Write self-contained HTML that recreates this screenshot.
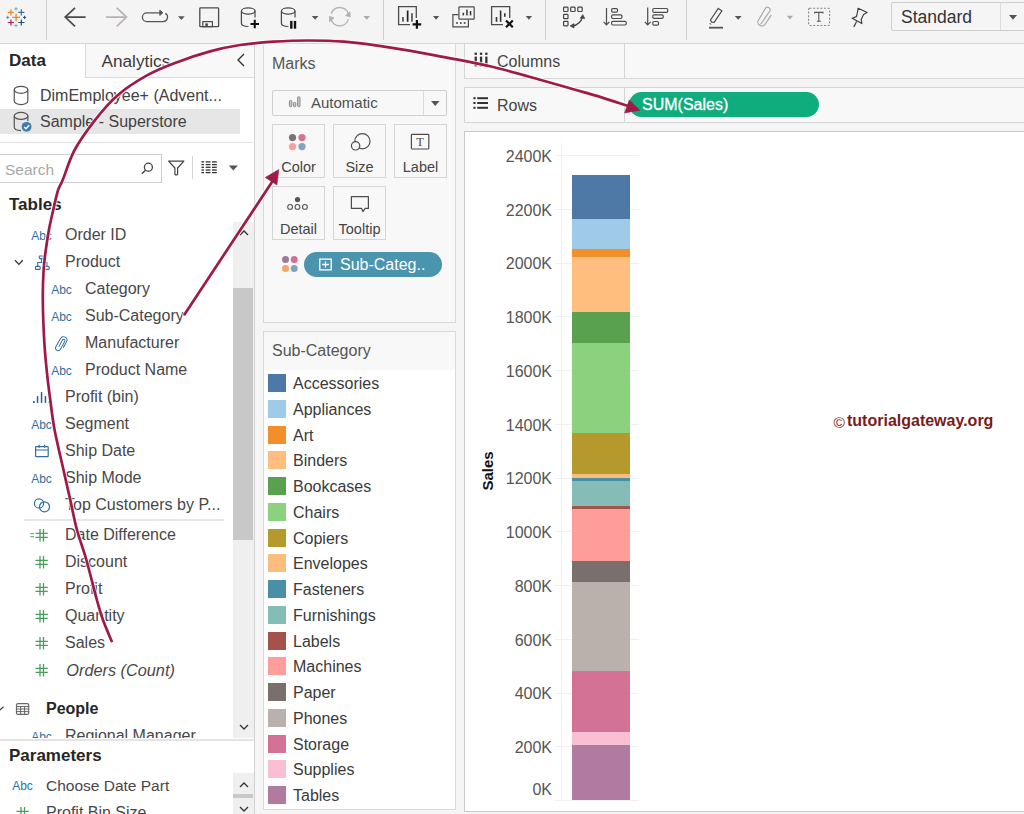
<!DOCTYPE html>
<html><head><meta charset="utf-8"><style>
html,body{margin:0;padding:0;width:1024px;height:814px;overflow:hidden;background:#f0f0f0}
body{position:relative;font-family:"Liberation Sans",sans-serif}
div,svg{position:absolute}
.t{white-space:nowrap}
</style></head><body>
<div style="left:0px;top:0px;width:1024px;height:814px;background:#f5f5f5"></div>
<div style="left:0px;top:0px;width:1024px;height:43px;background:#f4f4f4"></div>
<div style="left:0px;top:43px;width:1024px;height:1px;background:#d6d6d6"></div>
<div style="left:46px;top:0px;width:1px;height:40px;background:#d0d0d0"></div>
<div style="left:383px;top:0px;width:1px;height:40px;background:#d0d0d0"></div>
<div style="left:545px;top:0px;width:1px;height:40px;background:#d0d0d0"></div>
<div style="left:686px;top:0px;width:1px;height:40px;background:#d0d0d0"></div>
<div style="left:0px;top:44px;width:254px;height:770px;background:#fff"></div>
<div style="left:254px;top:44px;width:1px;height:770px;background:#d4d4d4"></div>
<div style="left:85px;top:44px;width:169px;height:34px;background:#f8f8f8;border-left:1px solid #d9d9d9;border-bottom:1px solid #d9d9d9;box-sizing:border-box"></div>
<div class="t" style="left:9px;top:52.11px;font-size:17px;line-height:17px;color:#262626;font-weight:bold;font-style:normal;">Data</div>
<div class="t" style="left:101.5px;top:53.14px;font-size:17.2px;line-height:17.2px;color:#3a3a3a;font-weight:normal;font-style:normal;">Analytics</div>
<svg style="left:236px;top:53px;" width="10" height="14" viewBox="0 0 10 14"><path d="M8 1 L2 7 L8 13" fill="none" stroke="#333" stroke-width="1.4"/></svg>
<div style="left:0px;top:109px;width:240px;height:25px;background:#e6e6e6"></div>
<div class="t" style="left:40px;top:88.46px;font-size:16px;line-height:16px;color:#424242;font-weight:normal;font-style:normal;">DimEmployee+ (Advent...</div>
<div class="t" style="left:40px;top:114.46px;font-size:16px;line-height:16px;color:#424242;font-weight:normal;font-style:normal;">Sample - Superstore</div>
<div style="left:0px;top:142px;width:253px;height:1px;background:#e0e0e0"></div>
<div style="left:-1px;top:154px;width:163px;height:29px;background:#fff;border:1px solid #cfcfcf;box-sizing:border-box"></div>
<div class="t" style="left:5px;top:162.08px;font-size:15.5px;line-height:15.5px;color:#a8a8a8;font-weight:normal;font-style:normal;">Search</div>
<div style="left:192px;top:156px;width:1px;height:23px;background:#d4d4d4"></div>
<div class="t" style="left:9px;top:195.61px;font-size:17px;line-height:17px;color:#262626;font-weight:bold;font-style:normal;">Tables</div>
<div class="t" style="left:65px;top:227.46px;font-size:16px;line-height:16px;color:#484848;font-weight:normal;font-style:normal;">Order ID</div>
<div class="t" style="left:65px;top:254.46px;font-size:16px;line-height:16px;color:#484848;font-weight:normal;font-style:normal;">Product</div>
<div class="t" style="left:85px;top:281.46px;font-size:16px;line-height:16px;color:#484848;font-weight:normal;font-style:normal;">Category</div>
<div class="t" style="left:85px;top:308.46px;font-size:16px;line-height:16px;color:#484848;font-weight:normal;font-style:normal;">Sub-Category</div>
<div class="t" style="left:85px;top:335.46px;font-size:16px;line-height:16px;color:#484848;font-weight:normal;font-style:normal;">Manufacturer</div>
<div class="t" style="left:85px;top:362.46px;font-size:16px;line-height:16px;color:#484848;font-weight:normal;font-style:normal;">Product Name</div>
<div class="t" style="left:65px;top:389.46px;font-size:16px;line-height:16px;color:#484848;font-weight:normal;font-style:normal;">Profit (bin)</div>
<div class="t" style="left:65px;top:416.46px;font-size:16px;line-height:16px;color:#484848;font-weight:normal;font-style:normal;">Segment</div>
<div class="t" style="left:65px;top:443.46px;font-size:16px;line-height:16px;color:#484848;font-weight:normal;font-style:normal;">Ship Date</div>
<div class="t" style="left:65px;top:470.46px;font-size:16px;line-height:16px;color:#484848;font-weight:normal;font-style:normal;">Ship Mode</div>
<div class="t" style="left:65px;top:497.46px;font-size:16px;line-height:16px;color:#484848;font-weight:normal;font-style:normal;">Top Customers by P...</div>
<div class="t" style="left:65px;top:527.46px;font-size:16px;line-height:16px;color:#484848;font-weight:normal;font-style:normal;">Date Difference</div>
<div class="t" style="left:65px;top:554.46px;font-size:16px;line-height:16px;color:#484848;font-weight:normal;font-style:normal;">Discount</div>
<div class="t" style="left:65px;top:581.46px;font-size:16px;line-height:16px;color:#484848;font-weight:normal;font-style:normal;">Profit</div>
<div class="t" style="left:65px;top:608.46px;font-size:16px;line-height:16px;color:#484848;font-weight:normal;font-style:normal;">Quantity</div>
<div class="t" style="left:65px;top:635.46px;font-size:16px;line-height:16px;color:#484848;font-weight:normal;font-style:normal;">Sales</div>
<div class="t" style="left:66.3px;top:662.20px;font-size:16.3px;line-height:16.3px;color:#484848;font-weight:normal;font-style:italic;">Orders (Count)</div>
<div style="left:24px;top:519px;width:200px;height:2px;background:#e6e6e6"></div>
<div class="t" style="left:46px;top:701.46px;font-size:16px;line-height:16px;color:#262626;font-weight:bold;font-style:normal;">People</div>
<div style="left:0;top:720px;width:233px;height:18px;overflow:hidden">
<div class="t" style="left:65px;top:8.46px;font-size:16px;line-height:16px;color:#484848;font-weight:normal;font-style:normal;">Regional Manager</div>
</div>
<div style="left:233px;top:222px;width:21px;height:516px;background:#efefef"></div>
<div style="left:233px;top:288px;width:20px;height:252px;background:#c8c8c8"></div>
<svg style="left:239px;top:229px;" width="10" height="7" viewBox="0 0 10 7"><path d="M1 6 L5 2 L9 6" fill="none" stroke="#333" stroke-width="1.3"/></svg>
<svg style="left:239px;top:724px;" width="10" height="7" viewBox="0 0 10 7"><path d="M1 1 L5 5 L9 1" fill="none" stroke="#333" stroke-width="1.3"/></svg>
<div style="left:0px;top:739px;width:254px;height:2px;background:#e4e4e4"></div>
<div class="t" style="left:9px;top:746.61px;font-size:17px;line-height:17px;color:#262626;font-weight:bold;font-style:normal;">Parameters</div>
<div class="t" style="left:46px;top:777.88px;font-size:15.5px;line-height:15.5px;color:#484848;font-weight:normal;font-style:normal;">Choose Date Part</div>
<div class="t" style="left:46px;top:805.46px;font-size:16px;line-height:16px;color:#484848;font-weight:normal;font-style:normal;">Profit Bin Size</div>
<div style="left:233px;top:773px;width:21px;height:41px;background:#efefef"></div>
<div style="left:233px;top:794px;width:20px;height:4px;background:#c8c8c8"></div>
<svg style="left:239px;top:781px;" width="10" height="7" viewBox="0 0 10 7"><path d="M1 6 L5 2 L9 6" fill="none" stroke="#333" stroke-width="1.3"/></svg>
<svg style="left:239px;top:806px;" width="10" height="7" viewBox="0 0 10 7"><path d="M1 1 L5 5 L9 1" fill="none" stroke="#333" stroke-width="1.3"/></svg>
<div style="left:263px;top:43px;width:193px;height:280px;background:#f8f8f8;border:1px solid #d8d8d8;box-sizing:border-box"></div>
<div class="t" style="left:272px;top:56.06px;font-size:16px;line-height:16px;color:#555;font-weight:normal;font-style:normal;">Marks</div>
<div style="left:272px;top:90px;width:175px;height:26px;background:#f8f8f8;border:1px solid #cfcfcf;border-radius:2px;box-sizing:border-box"></div>
<div style="left:423px;top:91px;width:1px;height:24px;background:#dcdcdc"></div>
<svg style="left:430.5px;top:101px;" width="10" height="6" viewBox="0 0 10 6"><path d="M0 0 L8.5 0 L4.25 5 Z" fill="#555"/></svg>
<div class="t" style="left:311px;top:95.00px;font-size:15px;line-height:15px;color:#505050;font-weight:normal;font-style:normal;">Automatic</div>
<div style="left:272px;top:124px;width:53px;height:54px;background:#f8f8f8;border:1px solid #d5d5d5;box-sizing:border-box"></div>
<div class="t" style="left:298.5px;top:159.53px;font-size:14.5px;line-height:14.5px;color:#444;font-weight:normal;font-style:normal;transform:translateX(-50%)">Color</div>
<div style="left:333px;top:124px;width:53px;height:54px;background:#f8f8f8;border:1px solid #d5d5d5;box-sizing:border-box"></div>
<div class="t" style="left:359.5px;top:159.53px;font-size:14.5px;line-height:14.5px;color:#444;font-weight:normal;font-style:normal;transform:translateX(-50%)">Size</div>
<div style="left:394px;top:124px;width:53px;height:54px;background:#f8f8f8;border:1px solid #d5d5d5;box-sizing:border-box"></div>
<div class="t" style="left:420.5px;top:159.53px;font-size:14.5px;line-height:14.5px;color:#444;font-weight:normal;font-style:normal;transform:translateX(-50%)">Label</div>
<div style="left:272px;top:186px;width:53px;height:54px;background:#f8f8f8;border:1px solid #d5d5d5;box-sizing:border-box"></div>
<div class="t" style="left:298.5px;top:221.53px;font-size:14.5px;line-height:14.5px;color:#444;font-weight:normal;font-style:normal;transform:translateX(-50%)">Detail</div>
<div style="left:333px;top:186px;width:53px;height:54px;background:#f8f8f8;border:1px solid #d5d5d5;box-sizing:border-box"></div>
<div class="t" style="left:359.5px;top:221.53px;font-size:14.5px;line-height:14.5px;color:#444;font-weight:normal;font-style:normal;transform:translateX(-50%)">Tooltip</div>
<div style="left:304px;top:252px;width:138px;height:25px;background:#4b94ad;border-radius:12.5px"></div>
<div class="t" style="left:340px;top:257.16px;font-size:16px;line-height:16px;color:#fff;font-weight:normal;font-style:normal;">Sub-Categ..</div>
<div style="left:263px;top:331px;width:193px;height:479px;background:#fff;border:1px solid #d8d8d8;box-sizing:border-box"></div>
<div style="left:264px;top:332px;width:191px;height:38px;background:#f8f8f8"></div>
<div class="t" style="left:272px;top:343.46px;font-size:16px;line-height:16px;color:#555;font-weight:normal;font-style:normal;">Sub-Category</div>
<div style="left:268px;top:374.0px;width:18px;height:18px;background:#4e79a7"></div>
<div class="t" style="left:293px;top:376.06px;font-size:16px;line-height:16px;color:#3a3a3a;font-weight:normal;font-style:normal;">Accessories</div>
<div style="left:268px;top:399.75px;width:18px;height:18px;background:#a0cbe8"></div>
<div class="t" style="left:293px;top:401.81px;font-size:16px;line-height:16px;color:#3a3a3a;font-weight:normal;font-style:normal;">Appliances</div>
<div style="left:268px;top:425.5px;width:18px;height:18px;background:#f28e2b"></div>
<div class="t" style="left:293px;top:427.56px;font-size:16px;line-height:16px;color:#3a3a3a;font-weight:normal;font-style:normal;">Art</div>
<div style="left:268px;top:451.25px;width:18px;height:18px;background:#ffbe7d"></div>
<div class="t" style="left:293px;top:453.31px;font-size:16px;line-height:16px;color:#3a3a3a;font-weight:normal;font-style:normal;">Binders</div>
<div style="left:268px;top:477.0px;width:18px;height:18px;background:#59a14f"></div>
<div class="t" style="left:293px;top:479.06px;font-size:16px;line-height:16px;color:#3a3a3a;font-weight:normal;font-style:normal;">Bookcases</div>
<div style="left:268px;top:502.75px;width:18px;height:18px;background:#8cd17d"></div>
<div class="t" style="left:293px;top:504.81px;font-size:16px;line-height:16px;color:#3a3a3a;font-weight:normal;font-style:normal;">Chairs</div>
<div style="left:268px;top:528.5px;width:18px;height:18px;background:#b6992d"></div>
<div class="t" style="left:293px;top:530.56px;font-size:16px;line-height:16px;color:#3a3a3a;font-weight:normal;font-style:normal;">Copiers</div>
<div style="left:268px;top:554.25px;width:18px;height:18px;background:#fbbd7b"></div>
<div class="t" style="left:293px;top:556.31px;font-size:16px;line-height:16px;color:#3a3a3a;font-weight:normal;font-style:normal;">Envelopes</div>
<div style="left:268px;top:580.0px;width:18px;height:18px;background:#4a8fa8"></div>
<div class="t" style="left:293px;top:582.06px;font-size:16px;line-height:16px;color:#3a3a3a;font-weight:normal;font-style:normal;">Fasteners</div>
<div style="left:268px;top:605.75px;width:18px;height:18px;background:#86bcb6"></div>
<div class="t" style="left:293px;top:607.81px;font-size:16px;line-height:16px;color:#3a3a3a;font-weight:normal;font-style:normal;">Furnishings</div>
<div style="left:268px;top:631.5px;width:18px;height:18px;background:#a4524a"></div>
<div class="t" style="left:293px;top:633.56px;font-size:16px;line-height:16px;color:#3a3a3a;font-weight:normal;font-style:normal;">Labels</div>
<div style="left:268px;top:657.25px;width:18px;height:18px;background:#ff9d9a"></div>
<div class="t" style="left:293px;top:659.31px;font-size:16px;line-height:16px;color:#3a3a3a;font-weight:normal;font-style:normal;">Machines</div>
<div style="left:268px;top:683.0px;width:18px;height:18px;background:#79706e"></div>
<div class="t" style="left:293px;top:685.06px;font-size:16px;line-height:16px;color:#3a3a3a;font-weight:normal;font-style:normal;">Paper</div>
<div style="left:268px;top:708.75px;width:18px;height:18px;background:#bab0ac"></div>
<div class="t" style="left:293px;top:710.81px;font-size:16px;line-height:16px;color:#3a3a3a;font-weight:normal;font-style:normal;">Phones</div>
<div style="left:268px;top:734.5px;width:18px;height:18px;background:#d37295"></div>
<div class="t" style="left:293px;top:736.56px;font-size:16px;line-height:16px;color:#3a3a3a;font-weight:normal;font-style:normal;">Storage</div>
<div style="left:268px;top:760.25px;width:18px;height:18px;background:#fabfd2"></div>
<div class="t" style="left:293px;top:762.31px;font-size:16px;line-height:16px;color:#3a3a3a;font-weight:normal;font-style:normal;">Supplies</div>
<div style="left:268px;top:786.0px;width:18px;height:18px;background:#b07aa1"></div>
<div class="t" style="left:293px;top:788.06px;font-size:16px;line-height:16px;color:#3a3a3a;font-weight:normal;font-style:normal;">Tables</div>
<div style="left:464px;top:43px;width:560px;height:36px;background:#f8f8f8;border:1px solid #d5d5d5;border-right:none;box-sizing:border-box"></div>
<div style="left:624px;top:44px;width:1px;height:34px;background:#d5d5d5"></div>
<div class="t" style="left:497px;top:53.86px;font-size:16px;line-height:16px;color:#444;font-weight:normal;font-style:normal;">Columns</div>
<div style="left:464px;top:87px;width:560px;height:36px;background:#f8f8f8;border:1px solid #d5d5d5;border-right:none;box-sizing:border-box"></div>
<div style="left:624px;top:88px;width:1px;height:34px;background:#d5d5d5"></div>
<div class="t" style="left:497px;top:97.76px;font-size:16px;line-height:16px;color:#444;font-weight:normal;font-style:normal;">Rows</div>
<div style="left:629px;top:92px;width:190px;height:25px;background:#0fad7e;border-radius:12.5px"></div>
<div class="t" style="left:642px;top:97.06px;font-size:16px;line-height:16px;color:#fff;font-weight:normal;font-style:normal;-webkit-text-stroke:0.3px #fff">SUM(Sales)</div>
<div style="left:464px;top:131px;width:560px;height:681px;background:#fff;border-top:1px solid #c9c9c9;border-left:1px solid #c9c9c9;border-bottom:1px solid #c9c9c9;box-sizing:border-box"></div>
<div style="left:561px;top:143px;width:1px;height:657px;background:#f0f0f0"></div>
<div style="left:555px;top:800.0px;width:84px;height:1px;background:#f0f0f0"></div>
<div class="t" style="left:552px;top:782.16px;font-size:16px;line-height:16px;color:#555;font-weight:normal;font-style:normal;transform:translateX(-100%)">0K</div>
<div style="left:555px;top:746.25px;width:84px;height:1px;background:#f0f0f0"></div>
<div class="t" style="left:552px;top:740.21px;font-size:16px;line-height:16px;color:#555;font-weight:normal;font-style:normal;transform:translateX(-100%)">200K</div>
<div style="left:555px;top:692.5px;width:84px;height:1px;background:#f0f0f0"></div>
<div class="t" style="left:552px;top:686.46px;font-size:16px;line-height:16px;color:#555;font-weight:normal;font-style:normal;transform:translateX(-100%)">400K</div>
<div style="left:555px;top:638.75px;width:84px;height:1px;background:#f0f0f0"></div>
<div class="t" style="left:552px;top:632.71px;font-size:16px;line-height:16px;color:#555;font-weight:normal;font-style:normal;transform:translateX(-100%)">600K</div>
<div style="left:555px;top:585.0px;width:84px;height:1px;background:#f0f0f0"></div>
<div class="t" style="left:552px;top:578.96px;font-size:16px;line-height:16px;color:#555;font-weight:normal;font-style:normal;transform:translateX(-100%)">800K</div>
<div style="left:555px;top:531.25px;width:84px;height:1px;background:#f0f0f0"></div>
<div class="t" style="left:552px;top:525.21px;font-size:16px;line-height:16px;color:#555;font-weight:normal;font-style:normal;transform:translateX(-100%)">1000K</div>
<div style="left:555px;top:477.5px;width:84px;height:1px;background:#f0f0f0"></div>
<div class="t" style="left:552px;top:471.46px;font-size:16px;line-height:16px;color:#555;font-weight:normal;font-style:normal;transform:translateX(-100%)">1200K</div>
<div style="left:555px;top:423.75px;width:84px;height:1px;background:#f0f0f0"></div>
<div class="t" style="left:552px;top:417.71px;font-size:16px;line-height:16px;color:#555;font-weight:normal;font-style:normal;transform:translateX(-100%)">1400K</div>
<div style="left:555px;top:370.0px;width:84px;height:1px;background:#f0f0f0"></div>
<div class="t" style="left:552px;top:363.96px;font-size:16px;line-height:16px;color:#555;font-weight:normal;font-style:normal;transform:translateX(-100%)">1600K</div>
<div style="left:555px;top:316.25px;width:84px;height:1px;background:#f0f0f0"></div>
<div class="t" style="left:552px;top:310.21px;font-size:16px;line-height:16px;color:#555;font-weight:normal;font-style:normal;transform:translateX(-100%)">1800K</div>
<div style="left:555px;top:262.5px;width:84px;height:1px;background:#f0f0f0"></div>
<div class="t" style="left:552px;top:256.46px;font-size:16px;line-height:16px;color:#555;font-weight:normal;font-style:normal;transform:translateX(-100%)">2000K</div>
<div style="left:555px;top:208.75px;width:84px;height:1px;background:#f0f0f0"></div>
<div class="t" style="left:552px;top:202.71px;font-size:16px;line-height:16px;color:#555;font-weight:normal;font-style:normal;transform:translateX(-100%)">2200K</div>
<div style="left:555px;top:155.0px;width:84px;height:1px;background:#f0f0f0"></div>
<div class="t" style="left:552px;top:148.96px;font-size:16px;line-height:16px;color:#555;font-weight:normal;font-style:normal;transform:translateX(-100%)">2400K</div>
<div style="left:572px;top:174.6px;width:58px;height:44.2px;background:#4e79a7"></div>
<div style="left:572px;top:218.8px;width:58px;height:30.1px;background:#a0cbe8"></div>
<div style="left:572px;top:248.9px;width:58px;height:7.9px;background:#f28e2b"></div>
<div style="left:572px;top:256.8px;width:58px;height:55.2px;background:#ffbe7d"></div>
<div style="left:572px;top:312.0px;width:58px;height:30.75px;background:#59a14f"></div>
<div style="left:572px;top:342.75px;width:58px;height:90.15px;background:#8cd17d"></div>
<div style="left:572px;top:432.9px;width:58px;height:40.9px;background:#b6992d"></div>
<div style="left:572px;top:473.8px;width:58px;height:4.6px;background:#fbbd7b"></div>
<div style="left:572px;top:478.4px;width:58px;height:2.4px;background:#4a8fa8"></div>
<div style="left:572px;top:480.8px;width:58px;height:25.4px;background:#86bcb6"></div>
<div style="left:572px;top:506.2px;width:58px;height:2.6px;background:#a4524a"></div>
<div style="left:572px;top:508.8px;width:58px;height:51.8px;background:#ff9d9a"></div>
<div style="left:572px;top:560.6px;width:58px;height:21.4px;background:#79706e"></div>
<div style="left:572px;top:582.0px;width:58px;height:89.0px;background:#bab0ac"></div>
<div style="left:572px;top:671.0px;width:58px;height:60.5px;background:#d37295"></div>
<div style="left:572px;top:731.5px;width:58px;height:13.0px;background:#fabfd2"></div>
<div style="left:572px;top:744.5px;width:58px;height:55.5px;background:#b07aa1"></div>
<div class="t" style="left:488.7px;top:461.50px;font-size:15px;line-height:15px;color:#111;font-weight:bold;font-style:normal;transform:translate(-50%,0) rotate(-90deg);transform-origin:50% 60%">Sales</div>
<div class="t" style="left:833.5px;top:415.38px;font-size:15.5px;line-height:15.5px;color:#7a1b1b;font-weight:normal;font-style:normal;">&copy;</div>
<div class="t" style="left:847px;top:413.46px;font-size:16px;line-height:16px;color:#7a1b1b;font-weight:bold;font-style:normal;">tutorialgateway.org</div>
<div style="left:891px;top:2px;width:135px;height:29px;background:#f5f5f5;border:1px solid #cfcfcf;border-radius:2px;box-sizing:border-box"></div>
<div style="left:1000px;top:3px;width:1px;height:27px;background:#dcdcdc"></div>
<div class="t" style="left:901px;top:9.19px;font-size:17.5px;line-height:17.5px;color:#333;font-weight:normal;font-style:normal;">Standard</div>
<svg style="left:1008.5px;top:14.7px;" width="10" height="6" viewBox="0 0 10 6"><path d="M0 0 L8 0 L4 4.8 Z" fill="#555"/></svg>
<svg style="left:0;top:0" width="1024" height="814" viewBox="0 0 1024 814"><path d="M12.200000000000001 17.4 H20.0 M16.1 13.499999999999998 V21.299999999999997" fill="none" stroke="#e8862a" stroke-width="1.3" /><path d="M7.800000000000001 12.3 H14.0 M10.9 9.200000000000001 V15.4" fill="none" stroke="#e8862a" stroke-width="1.2" /><path d="M18.2 12.3 H24.400000000000002 M21.3 9.200000000000001 V15.4" fill="none" stroke="#3d6fa8" stroke-width="1.2" /><path d="M7.800000000000001 22.5 H14.0 M10.9 19.4 V25.6" fill="none" stroke="#b0224c" stroke-width="1.2" /><path d="M18.2 22.5 H24.400000000000002 M21.3 19.4 V25.6" fill="none" stroke="#1f4e86" stroke-width="1.2" /><path d="M14.4 8.9 H17.6 M16.0 7.300000000000001 V10.5" fill="none" stroke="#7a9fc0" stroke-width="1.0" /><path d="M14.4 25.5 H17.6 M16.0 23.9 V27.1" fill="none" stroke="#8aa3bb" stroke-width="1.0" /><path d="M6.1 17.4 H9.3 M7.7 15.799999999999999 V19.0" fill="none" stroke="#5b8fc0" stroke-width="1.0" /><path d="M23.0 17.4 H26.200000000000003 M24.6 15.799999999999999 V19.0" fill="none" stroke="#1f4e86" stroke-width="1.0" /><path d="M75 7.8 L65.2 17.1 L75 26.4 M65.2 17.1 H85.6" fill="none" stroke="#4d4a4b" stroke-width="1.7" /><path d="M116.7 7.8 L126.5 17.1 L116.7 26.4 M126.5 17.1 H106.1" fill="none" stroke="#b8b2b0" stroke-width="1.7" /><path d="M162.3 12.8 H146.8 A4.4 4.4 0 0 0 146.8 21.6 H163.2 A4.4 4.4 0 0 0 165.3 13.4" fill="none" stroke="#555" stroke-width="1.3" /><path d="M159.8 10.2 L162.8 12.8 L159.8 15.4 Z" fill="#555" stroke="#555" stroke-width="1" /><path d="M178 16.2 L184.7 16.2 L181.35 20 Z" fill="#555"/><rect x="199.8" y="7.9" width="18.8" height="18.8" rx="0.8" fill="none" stroke="#4f4b4c" stroke-width="1.3" /><rect x="202.8" y="21.6" width="9.6" height="5.1" rx="0" fill="none" stroke="#4f4b4c" stroke-width="1.2" /><rect x="205.3" y="23.4" width="2.6" height="2.6" rx="0" fill="#4f4b4c" stroke="none" stroke-width="1" /><ellipse cx="248.2" cy="10.9" rx="6.8" ry="3.1" fill="none" stroke="#4f4b4c" stroke-width="1.25"/><path d="M241.39999999999998 10.9 V23.3 Q241.39999999999998 26.4 248.5 26.5" fill="none" stroke="#4f4b4c" stroke-width="1.25" /><path d="M255.0 10.9 V17.4" fill="none" stroke="#4f4b4c" stroke-width="1.25" /><path d="M250.5 24 H259 M254.75 19.7 V28.3" fill="none" stroke="#111" stroke-width="2.1" /><ellipse cx="288.2" cy="10.9" rx="6.8" ry="3.1" fill="none" stroke="#4f4b4c" stroke-width="1.25"/><path d="M281.4 10.9 V23.3 Q281.4 26.4 288.5 26.5" fill="none" stroke="#4f4b4c" stroke-width="1.25" /><path d="M295.0 10.9 V17.4" fill="none" stroke="#4f4b4c" stroke-width="1.25" /><rect x="290.1" y="20.9" width="2.4" height="7.8" rx="0" fill="#111" stroke="none" stroke-width="1" /><rect x="293.8" y="20.9" width="2.4" height="7.8" rx="0" fill="#111" stroke="none" stroke-width="1" /><path d="M311.8 16.0 L318.4 16.0 L315.1 19.8 Z" fill="#555"/><path d="M331.3 13.8 A9 9 0 0 1 348.6 14.3" fill="none" stroke="#b5afad" stroke-width="1.3" /><path d="M348.4 19.3 A9 9 0 0 1 331.0 19.0" fill="none" stroke="#b5afad" stroke-width="1.3" /><path d="M350.0 11.8 L350.2 17.0 L345.6 15.6 Z" fill="#b5afad" stroke="#b5afad" stroke-width="0.8" /><path d="M329.6 21.6 L329.4 16.4 L334.0 17.8 Z" fill="#b5afad" stroke="#b5afad" stroke-width="0.8" /><path d="M363.4 16.0 L370 16.0 L366.7 19.8 Z" fill="#aaa"/><path d="M416.3 17.9 V6.7 H398.6 V24.6 H410" fill="none" stroke="#4f4b4c" stroke-width="1.3" /><rect x="402.1" y="17.0" width="1.7" height="4.7" rx="0" fill="#555" stroke="none" stroke-width="1" /><rect x="406.8" y="10.5" width="1.7" height="11.2" rx="0" fill="#222" stroke="none" stroke-width="1" /><rect x="411.1" y="13.2" width="1.7" height="8.5" rx="0" fill="#555" stroke="none" stroke-width="1" /><path d="M412.6 24.4 H421.2 M416.9 20.1 V28.7" fill="none" stroke="#111" stroke-width="2.2" /><path d="M433 16.0 L439.2 16.0 L436.1 19.8 Z" fill="#555"/><path d="M458.3 14.6 H452.9 V26.8 H468.4 V19.8" fill="none" stroke="#4f4b4c" stroke-width="1.2" /><rect x="458.9" y="6.9" width="15.3" height="12.2" rx="0.6" fill="none" stroke="#4f4b4c" stroke-width="1.2" /><rect x="462.6" y="12.8" width="1.5" height="2.6" rx="0" fill="#333" stroke="none" stroke-width="1" /><rect x="466.2" y="9.6" width="1.5" height="5.8" rx="0" fill="#333" stroke="none" stroke-width="1" /><rect x="469.8" y="11.0" width="1.5" height="4.4" rx="0" fill="#333" stroke="none" stroke-width="1" /><rect x="456.2" y="22.2" width="1.6" height="1.6" rx="0" fill="#333" stroke="none" stroke-width="1" /><rect x="460.0" y="22.2" width="1.6" height="1.6" rx="0" fill="#333" stroke="none" stroke-width="1" /><rect x="463.8" y="22.2" width="1.6" height="1.6" rx="0" fill="#333" stroke="none" stroke-width="1" /><path d="M509.7 18.0 V6.7 H491.6 V24.6 H503" fill="none" stroke="#4f4b4c" stroke-width="1.3" /><rect x="495.7" y="17.0" width="1.6" height="4.8" rx="0" fill="#333" stroke="none" stroke-width="1" /><rect x="499.8" y="10.5" width="1.6" height="11.3" rx="0" fill="#333" stroke="none" stroke-width="1" /><rect x="504.0" y="13.3" width="1.6" height="3.5" rx="0" fill="#333" stroke="none" stroke-width="1" /><path d="M506 20.5 L512.8 27.3 M512.8 20.5 L506 27.3" fill="none" stroke="#111" stroke-width="2.2" /><path d="M525.7 16.0 L532 16.0 L528.85 19.8 Z" fill="#555"/><rect x="563.6" y="7.1" width="4.4" height="4.4" rx="0.8" fill="none" stroke="#444" stroke-width="1.2" /><rect x="570.7" y="7.1" width="4.4" height="4.4" rx="0.8" fill="none" stroke="#444" stroke-width="1.2" /><rect x="577.8" y="7.1" width="4.4" height="4.4" rx="0.8" fill="none" stroke="#444" stroke-width="1.2" /><rect x="563.6" y="14.3" width="4.4" height="4.4" rx="0.8" fill="none" stroke="#444" stroke-width="1.2" /><rect x="563.6" y="21.4" width="4.4" height="4.4" rx="0.8" fill="none" stroke="#444" stroke-width="1.2" /><path d="M572.2 26.2 Q580.6 24.5 582.6 16.5" fill="none" stroke="#444" stroke-width="1.2" /><path d="M580.2 18.2 L582.8 14.6 L584.8 18.6 Z" fill="#444" stroke="#444" stroke-width="0.6" /><path d="M570.0 25.9 L574.0 23.6 L574.0 28.0 Z" fill="#444" stroke="#444" stroke-width="0.6" /><path d="M606.5 7.9 V24.6 M603.6 21.8 L606.5 24.8 L609.4 21.8" fill="none" stroke="#4f4b4c" stroke-width="1.2" /><rect x="611.6" y="8.6" width="5.9" height="3.6" rx="1.2" fill="none" stroke="#4f4b4c" stroke-width="1.2" /><rect x="611.6" y="14.9" width="10.3" height="3.6" rx="1.2" fill="none" stroke="#4f4b4c" stroke-width="1.2" /><rect x="611.6" y="21.3" width="14.6" height="3.7" rx="1.2" fill="none" stroke="#4f4b4c" stroke-width="1.2" /><path d="M647.7 7.5 V24.6 M644.8 21.8 L647.7 24.8 L650.6 21.8" fill="none" stroke="#4f4b4c" stroke-width="1.2" /><rect x="652.8" y="8.5" width="14.9" height="3.9" rx="1.2" fill="none" stroke="#4f4b4c" stroke-width="1.2" /><rect x="652.8" y="14.8" width="10.4" height="3.6" rx="1.2" fill="none" stroke="#4f4b4c" stroke-width="1.2" /><rect x="652.8" y="21.5" width="5.7" height="3.6" rx="1.2" fill="none" stroke="#4f4b4c" stroke-width="1.2" /><path d="M718.3 8.4 L721.9 10.8 L714.1 22.4 L711.6 22.2 L710.5 20.0 Z" fill="none" stroke="#4f4b4c" stroke-width="1.2" /><path d="M709.6 23.6 L711.2 24.2" fill="none" stroke="#4f4b4c" stroke-width="1.0" /><rect x="709" y="26.8" width="14" height="1.8" rx="0" fill="#555" stroke="none" stroke-width="1" /><path d="M734.8 16.0 L741.6 16.0 L738.2 19.8 Z" fill="#555"/><path d="M760.6 24.4 L770.0 10.8 A2.6 2.6 0 0 0 765.6 8.2 L758.6 19.8 A3.8 3.8 0 0 0 765.0 24.3 L771.4 14.8" fill="none" stroke="#aaa" stroke-width="1.2" transform="translate(0,0)"/><path d="M786.9 15.7 L793 15.7 L789.95 19.4 Z" fill="#aaa"/><rect x="808.6" y="8.3" width="21.0" height="17.2" rx="1" fill="none" stroke="#888" stroke-width="1.1" stroke-dasharray="2 1.6"/><path d="M814.6 13.6 V12.4 H823.0 V13.6 M818.8 12.4 V21.3 M816.8 21.3 H820.8" fill="none" stroke="#555" stroke-width="1.1" /><path d="M858.1 8.3 L867.1 12.6 L863.6 14.4 Q862.0 17.5 861.2 19.8 L861.9 23.6 L852.2 18.3 L856.4 16.6 Q857.8 12.0 858.1 8.3 Z" fill="none" stroke="#3a3a3a" stroke-width="1.15" stroke-linejoin="round"/><path d="M856.6 21.4 L853.8 26.9" fill="none" stroke="#3a3a3a" stroke-width="1.2" /><ellipse cx="21.05" cy="89.8" rx="6.8" ry="3.5" fill="none" stroke="#555" stroke-width="1.2"/><path d="M14.25 89.8 V101.1 A6.8 3.5 0 0 0 27.85 101.1 V89.8" fill="none" stroke="#555" stroke-width="1.2" /><ellipse cx="21.05" cy="115.9" rx="6.8" ry="3.5" fill="none" stroke="#555" stroke-width="1.2"/><path d="M14.25 115.9 V127.1 Q14.25 130.6 21.05 130.6" fill="none" stroke="#555" stroke-width="1.2" /><path d="M27.85 115.9 V121" fill="none" stroke="#555" stroke-width="1.2" /><circle cx="26.6" cy="126.8" r="4.9" fill="#3f7bb0" stroke="none" stroke-width="1"/><path d="M24.2 126.9 L26.0 128.7 L29.2 125.2" fill="none" stroke="#fff" stroke-width="1.4" /><circle cx="148.4" cy="167.2" r="4.0" fill="none" stroke="#444" stroke-width="1.3"/><path d="M145.5 170.2 L141.8 173.8" fill="none" stroke="#444" stroke-width="1.4" /><path d="M168.6 161.1 H183.9 L177.6 168.0 V174.3 Q176.3 175.6 174.9 174.3 V168.0 Z" fill="none" stroke="#444" stroke-width="1.2" stroke-linejoin="round"/><rect x="201.4" y="161.25" width="2.6" height="1.3" rx="0" fill="#333" stroke="none" stroke-width="1" /><rect x="205.7" y="161.25" width="4.8" height="1.3" rx="0" fill="#333" stroke="none" stroke-width="1" /><rect x="212.0" y="161.25" width="4.8" height="1.3" rx="0" fill="#333" stroke="none" stroke-width="1" /><rect x="201.4" y="163.95" width="2.6" height="1.3" rx="0" fill="#333" stroke="none" stroke-width="1" /><rect x="205.7" y="163.95" width="4.8" height="1.3" rx="0" fill="#333" stroke="none" stroke-width="1" /><rect x="212.0" y="163.95" width="4.8" height="1.3" rx="0" fill="#333" stroke="none" stroke-width="1" /><rect x="201.4" y="166.65" width="2.6" height="1.3" rx="0" fill="#333" stroke="none" stroke-width="1" /><rect x="205.7" y="166.65" width="4.8" height="1.3" rx="0" fill="#333" stroke="none" stroke-width="1" /><rect x="212.0" y="166.65" width="4.8" height="1.3" rx="0" fill="#333" stroke="none" stroke-width="1" /><rect x="201.4" y="169.35" width="2.6" height="1.3" rx="0" fill="#333" stroke="none" stroke-width="1" /><rect x="205.7" y="169.35" width="4.8" height="1.3" rx="0" fill="#333" stroke="none" stroke-width="1" /><rect x="212.0" y="169.35" width="4.8" height="1.3" rx="0" fill="#333" stroke="none" stroke-width="1" /><rect x="201.4" y="171.95" width="2.6" height="1.3" rx="0" fill="#333" stroke="none" stroke-width="1" /><rect x="205.7" y="171.95" width="4.8" height="1.3" rx="0" fill="#333" stroke="none" stroke-width="1" /><rect x="212.0" y="171.95" width="4.8" height="1.3" rx="0" fill="#333" stroke="none" stroke-width="1" /><path d="M228.8 165.4 L237.8 165.4 L233.3 170.4 Z" fill="#555"/><text x="31.2" y="240" font-family="Liberation Sans" font-size="12" fill="#2f70a0">Abc</text><text x="51.2" y="294" font-family="Liberation Sans" font-size="12" fill="#2f70a0">Abc</text><text x="51.2" y="321" font-family="Liberation Sans" font-size="12" fill="#2f70a0">Abc</text><text x="51.2" y="375" font-family="Liberation Sans" font-size="12" fill="#2f70a0">Abc</text><text x="31.2" y="429" font-family="Liberation Sans" font-size="12" fill="#2f70a0">Abc</text><text x="31.2" y="483" font-family="Liberation Sans" font-size="12" fill="#2f70a0">Abc</text><text x="12.2" y="790" font-family="Liberation Sans" font-size="12" fill="#2f70a0">Abc</text><svg x="0" y="720" width="233" height="18" overflow="hidden"><text x="31.2" y="21" font-family="Liberation Sans" font-size="12" fill="#2f70a0">Abc</text></svg><path d="M15 260.2 L18.9 264.4 L22.8 260.2" fill="none" stroke="#333" stroke-width="1.3" /><rect x="39.3" y="256.0" width="4.5" height="2.6" rx="0.6" fill="none" stroke="#2f70a0" stroke-width="1.1" /><path d="M41.5 258.6 V262.5 M37.7 266.4 V262.5 H46.9 V266.4" fill="none" stroke="#2f70a0" stroke-width="1.1" /><rect x="35.4" y="266.4" width="4.8" height="3.0" rx="1" fill="none" stroke="#2f70a0" stroke-width="1.1" /><rect x="44.6" y="266.4" width="4.6" height="3.0" rx="1" fill="none" stroke="#2f70a0" stroke-width="1.1" /><path d="M-1.1 4 V-5.2 A1.55 1.55 0 0 1 2.0 -5.2 V5.6 A3.0 3.0 0 0 1 -4.0 5.6 V-5.6 A4.0 4.0 0 0 1 4.0 -5.6 V2.5" fill="none" stroke="#2f70a0" stroke-width="1.1" transform="translate(61.2 344.3) rotate(29) scale(0.86)"/><rect x="33.0" y="401.1" width="1.7" height="1.8" rx="0" fill="#25608f" stroke="none" stroke-width="1" /><rect x="36.8" y="396.1" width="1.5" height="6.8" rx="0" fill="#25608f" stroke="none" stroke-width="1" /><rect x="40.8" y="392.1" width="1.5" height="10.8" rx="0" fill="#25608f" stroke="none" stroke-width="1" /><rect x="44.7" y="396.1" width="1.5" height="6.8" rx="0" fill="#25608f" stroke="none" stroke-width="1" /><rect x="48.3" y="401.1" width="1.7" height="1.8" rx="0" fill="#25608f" stroke="none" stroke-width="1" /><rect x="35.6" y="446.7" width="12.6" height="10.0" rx="0.8" fill="none" stroke="#2f70a0" stroke-width="1.2" /><path d="M35.6 450.0 H48.2 M39.2 444.8 V447.8 M44.6 444.8 V447.8" fill="none" stroke="#2f70a0" stroke-width="1.2" /><circle cx="39.0" cy="503.4" r="4.6" fill="none" stroke="#2f70a0" stroke-width="1.2"/><circle cx="44.5" cy="506.8" r="5.0" fill="none" stroke="#2f70a0" stroke-width="1.2"/><path d="M40.0 529 V541.4 M43.5 529 V541.4 M35.5 533.4 H47.8 M35.5 537.4 H47.8" fill="none" stroke="#4a9d5c" stroke-width="1.3" /><path d="M30.3 533.8 H34 M30.3 536.8 H34" fill="none" stroke="#4a9d5c" stroke-width="1.1" /><path d="M40.0 556 V568.4 M43.5 556 V568.4 M35.5 560.4 H47.8 M35.5 564.4 H47.8" fill="none" stroke="#4a9d5c" stroke-width="1.3" /><path d="M40.0 583 V595.4 M43.5 583 V595.4 M35.5 587.4 H47.8 M35.5 591.4 H47.8" fill="none" stroke="#4a9d5c" stroke-width="1.3" /><path d="M40.0 610 V622.4 M43.5 610 V622.4 M35.5 614.4 H47.8 M35.5 618.4 H47.8" fill="none" stroke="#4a9d5c" stroke-width="1.3" /><path d="M40.0 637 V649.4 M43.5 637 V649.4 M35.5 641.4 H47.8 M35.5 645.4 H47.8" fill="none" stroke="#4a9d5c" stroke-width="1.3" /><path d="M40.0 664 V676.4 M43.5 664 V676.4 M35.5 668.4 H47.8 M35.5 672.4 H47.8" fill="none" stroke="#4a9d5c" stroke-width="1.3" /><path d="M21.0 807 V819.4 M24.5 807 V819.4 M16.5 811.4 H28.8 M16.5 815.4 H28.8" fill="none" stroke="#4a9d5c" stroke-width="1.3" /><rect x="16.5" y="703.6" width="12.2" height="10.8" rx="1.5" fill="none" stroke="#666" stroke-width="1.2" /><path d="M16.5 706.5 H28.7 M20.6 706.5 V714.4 M24.6 706.5 V714.4 M16.5 709.0 H28.7 M16.5 711.6 H28.7" fill="none" stroke="#666" stroke-width="1.0" /><path d="M0.0 710.0 L3.6 706.6" fill="none" stroke="#444" stroke-width="1.3" /><rect x="289.4" y="100.4" width="2.4" height="6.4" rx="1.1" fill="#c8c8c8" stroke="#8a8a8a" stroke-width="1" /><rect x="293.4" y="102.4" width="2.4" height="4.4" rx="1.1" fill="#c8c8c8" stroke="#8a8a8a" stroke-width="1" /><rect x="297.6" y="96.8" width="2.4" height="10.0" rx="1.1" fill="#c8c8c8" stroke="#8a8a8a" stroke-width="1" /><circle cx="292.5" cy="137.6" r="3.6" fill="#7b7476" stroke="none" stroke-width="1"/><circle cx="302.0" cy="137.6" r="3.6" fill="#d4738f" stroke="none" stroke-width="1"/><circle cx="292.5" cy="146.6" r="3.6" fill="#f9a19a" stroke="none" stroke-width="1"/><circle cx="302.0" cy="146.6" r="3.6" fill="#7ea4c6" stroke="none" stroke-width="1"/><circle cx="362.4" cy="141.2" r="7.6" fill="none" stroke="#4f4b4c" stroke-width="1.2"/><circle cx="355.6" cy="145.8" r="4.2" fill="#f8f8f8" stroke="#4f4b4c" stroke-width="1.2"/><rect x="411.4" y="134.4" width="17.4" height="14.6" rx="0.8" fill="none" stroke="#4f4b4c" stroke-width="1.2" /><text x="420.1" y="146" text-anchor="middle" font-family="Liberation Serif" font-size="12.5" fill="#4f4b4c">T</text><circle cx="297.5" cy="199.6" r="2.6" fill="#555" stroke="none" stroke-width="1"/><circle cx="290.1" cy="206.9" r="2.4" fill="none" stroke="#555" stroke-width="1.1"/><circle cx="297.5" cy="206.9" r="2.4" fill="none" stroke="#555" stroke-width="1.1"/><circle cx="304.9" cy="206.9" r="2.4" fill="none" stroke="#555" stroke-width="1.1"/><path d="M351.4 196.6 H368.4 V208.4 H365.2 L362.9 211.6 L361.6 208.4 H351.4 Z" fill="none" stroke="#4f4b4c" stroke-width="1.2" stroke-linejoin="round"/><circle cx="285.5" cy="259.6" r="3.5" fill="#9a7b90" stroke="none" stroke-width="1"/><circle cx="294.2" cy="259.6" r="3.5" fill="#d4708f" stroke="none" stroke-width="1"/><circle cx="285.5" cy="268.4" r="3.5" fill="#f5a46a" stroke="none" stroke-width="1"/><circle cx="294.2" cy="268.4" r="3.5" fill="#7fa3c0" stroke="none" stroke-width="1"/><rect x="319.8" y="259.1" width="11.4" height="10.8" rx="0" fill="none" stroke="#fff" stroke-width="1.3" /><path d="M322.2 264.5 H328.8 M325.5 261.4 V267.6" fill="none" stroke="#fff" stroke-width="1.3" /><rect x="474.6" y="56.6" width="2.3" height="9.8" rx="0" fill="#333" stroke="none" stroke-width="1" /><rect x="474.6" y="52.6" width="2.3" height="2.3" rx="0" fill="#333" stroke="none" stroke-width="1" /><rect x="479.9" y="56.6" width="2.3" height="9.8" rx="0" fill="#333" stroke="none" stroke-width="1" /><rect x="479.9" y="52.6" width="2.3" height="2.3" rx="0" fill="#333" stroke="none" stroke-width="1" /><rect x="485.2" y="56.6" width="2.3" height="9.8" rx="0" fill="#333" stroke="none" stroke-width="1" /><rect x="485.2" y="52.6" width="2.3" height="2.3" rx="0" fill="#333" stroke="none" stroke-width="1" /><rect x="473.4" y="97.2" width="2.2" height="2.0" rx="0" fill="#333" stroke="none" stroke-width="1" /><rect x="477.2" y="97.2" width="10.8" height="2.0" rx="0" fill="#333" stroke="none" stroke-width="1" /><rect x="473.4" y="102.0" width="2.2" height="2.0" rx="0" fill="#333" stroke="none" stroke-width="1" /><rect x="477.2" y="102.0" width="10.8" height="2.0" rx="0" fill="#333" stroke="none" stroke-width="1" /><rect x="473.4" y="106.8" width="2.2" height="2.0" rx="0" fill="#333" stroke="none" stroke-width="1" /><rect x="477.2" y="106.8" width="10.8" height="2.0" rx="0" fill="#333" stroke="none" stroke-width="1" /></svg>
<svg style="left:0;top:0" width="1024" height="814" viewBox="0 0 1024 814"><path d="M111.6 641.1 C110.2 637.6 105.5 626.9 103.0 620.0 C100.5 613.1 99.7 610.0 96.9 600.0 C94.1 590.0 89.7 571.7 86.4 560.0 C83.1 548.3 79.7 540.0 77.0 530.0 C74.3 520.0 72.5 510.0 70.3 500.0 C68.0 490.0 66.1 481.7 63.5 470.0 C60.9 458.3 56.8 441.7 54.6 430.0 C52.4 418.3 51.5 409.2 50.3 400.0 C49.1 390.8 48.2 384.7 47.2 375.0 C46.2 365.3 45.0 354.5 44.3 342 C43.6 329.5 42.9 312.0 42.8 300 C42.7 288.0 43.1 278.3 43.6 270 C44.1 261.7 44.9 256.7 45.8 250 C46.7 243.3 47.7 236.7 48.9 230 C50.1 223.3 51.7 216.7 53.2 210 C54.7 203.3 56.5 195.0 58.1 190 C59.7 185.0 60.0 186.7 62.7 180 C65.5 173.3 69.2 160.0 74.6 150 C80.0 140.0 87.9 129.1 95.2 119.8 C102.5 110.5 109.8 102.0 118.6 94.5 C127.4 87.0 138.1 80.3 147.9 74.9 C157.7 69.5 166.8 66.1 177.2 62.2 C187.5 58.3 199.5 54.3 210 51.4 C220.5 48.5 229.4 46.6 240 45 C250.6 43.4 262.0 42.5 273.4 41.7 C284.8 41.0 296.9 40.5 308.6 40.5 C320.3 40.5 330.0 40.5 343.7 41.7 C357.4 42.9 375.0 45.2 390.6 47.6 C406.2 50.0 420.9 52.7 437.5 55.8 C454.1 58.9 472.9 62.3 490 66.3 C507.1 70.3 526.7 76.0 540 79.7 C553.3 83.4 560.0 85.4 570 88.3 C580.0 91.2 590.6 94.1 600 96.9 C609.4 99.8 622.1 104.0 626.5 105.4" fill="none" stroke="#fff" stroke-opacity="0.75" stroke-width="4.6" stroke-linecap="round"/><path d="M184.5 314.4 L272.0 182.0" fill="none" stroke="#fff" stroke-opacity="0.75" stroke-width="4.6" stroke-linecap="round"/><path d="M111.6 641.1 C110.2 637.6 105.5 626.9 103.0 620.0 C100.5 613.1 99.7 610.0 96.9 600.0 C94.1 590.0 89.7 571.7 86.4 560.0 C83.1 548.3 79.7 540.0 77.0 530.0 C74.3 520.0 72.5 510.0 70.3 500.0 C68.0 490.0 66.1 481.7 63.5 470.0 C60.9 458.3 56.8 441.7 54.6 430.0 C52.4 418.3 51.5 409.2 50.3 400.0 C49.1 390.8 48.2 384.7 47.2 375.0 C46.2 365.3 45.0 354.5 44.3 342 C43.6 329.5 42.9 312.0 42.8 300 C42.7 288.0 43.1 278.3 43.6 270 C44.1 261.7 44.9 256.7 45.8 250 C46.7 243.3 47.7 236.7 48.9 230 C50.1 223.3 51.7 216.7 53.2 210 C54.7 203.3 56.5 195.0 58.1 190 C59.7 185.0 60.0 186.7 62.7 180 C65.5 173.3 69.2 160.0 74.6 150 C80.0 140.0 87.9 129.1 95.2 119.8 C102.5 110.5 109.8 102.0 118.6 94.5 C127.4 87.0 138.1 80.3 147.9 74.9 C157.7 69.5 166.8 66.1 177.2 62.2 C187.5 58.3 199.5 54.3 210 51.4 C220.5 48.5 229.4 46.6 240 45 C250.6 43.4 262.0 42.5 273.4 41.7 C284.8 41.0 296.9 40.5 308.6 40.5 C320.3 40.5 330.0 40.5 343.7 41.7 C357.4 42.9 375.0 45.2 390.6 47.6 C406.2 50.0 420.9 52.7 437.5 55.8 C454.1 58.9 472.9 62.3 490 66.3 C507.1 70.3 526.7 76.0 540 79.7 C553.3 83.4 560.0 85.4 570 88.3 C580.0 91.2 590.6 94.1 600 96.9 C609.4 99.8 622.1 104.0 626.5 105.4" fill="none" stroke="#a01a47" stroke-width="2.7" stroke-linecap="round"/><path d="M629.3 100 L639.8 110.2 L624.6 112.9 Z" fill="#a01a47" stroke="#a01a47" stroke-width="0.6" stroke-linejoin="round"/><path d="M184.5 314.4 L272.0 182.0" fill="none" stroke="#a01a47" stroke-width="2.7" stroke-linecap="round"/><path d="M278.8 169.6 L265.3 177.4 L276.9 185.0 Z" fill="#a01a47" stroke="#a01a47" stroke-width="0.6" stroke-linejoin="round"/></svg>
</body></html>
